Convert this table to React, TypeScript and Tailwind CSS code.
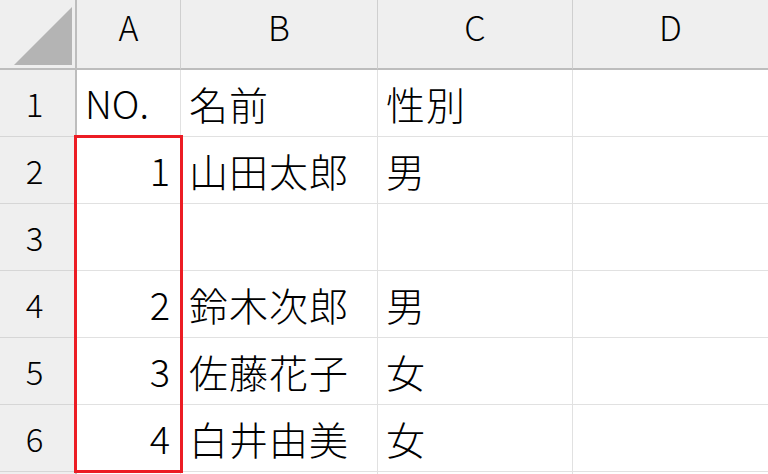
import React from "react";

const cols = ["A", "B", "C", "D"];
const rows: { n: string; a: string; b: string; c: string }[] = [
  { n: "1", a: "NO.", b: "名前", c: "性別" },
  { n: "2", a: "1", b: "山田太郎", c: "男" },
  { n: "3", a: "", b: "", c: "" },
  { n: "4", a: "2", b: "鈴木次郎", c: "男" },
  { n: "5", a: "3", b: "佐藤花子", c: "女" },
  { n: "6", a: "4", b: "白井由美", c: "女" },
  { n: "", a: "", b: "", c: "" },
];

const font = { fontFamily: '"Noto Sans CJK JP", "Noto Sans", sans-serif' };

export default function App() {
  return (
    <div className="relative w-[768px] h-[474px] overflow-hidden bg-white text-black font-light" style={font}>
      <div className="grid grid-cols-[77px_104px_197px_195px_195px] grid-rows-[70px_repeat(7,67px)]">
        {/* header row */}
        <div className="bg-[#efefef] border-r-2 border-b-2 border-[#bdbdbd] flex items-end justify-end pb-[3px] pr-[3px]">
          <svg width="58" height="58" viewBox="0 0 58 58">
            <polygon points="0,58 58,58 58,0" fill="#b4b4b4" />
          </svg>
        </div>
        {cols.map((c, i) => (
          <div
            key={c}
            className={`bg-[#efefef] border-b-2 border-[#bdbdbd] flex items-center justify-center text-[34px] leading-none pb-[14px] ${
              i < 3 ? "border-r border-r-[#cfcfcf]" : ""
            }`}
          >
            {c}
          </div>
        ))}
        {rows.map((r, idx) => (
          <React.Fragment key={idx}>
            <div className="bg-[#efefef] border-r-2 border-r-[#bdbdbd] border-b border-b-[#d6d6d6] flex items-center justify-center text-[33px] leading-none pr-[6px]">
              {r.n}
            </div>
            <div
              className={`border-r border-b border-[#e1e1e1] flex items-center text-[38px] leading-none px-[10px] ${
                r.n === "1" ? "justify-start pl-[8px]" : "justify-end"
              }`}
            >
              {r.a}
            </div>
            <div className="border-r border-b border-[#e1e1e1] flex items-center text-[39px] leading-none pl-[8px] tracking-[1px]">
              {r.b}
            </div>
            <div className="border-r border-b border-[#e1e1e1] flex items-center text-[39px] leading-none pl-[8px] tracking-[1px]">
              {r.c}
            </div>
            <div className="border-b border-[#e1e1e1]" />
          </React.Fragment>
        ))}
      </div>
      <div className="absolute left-[74px] top-[135px] w-[109px] h-[338px] border-[3px] border-[#ec1c24]" />
    </div>
  );
}
